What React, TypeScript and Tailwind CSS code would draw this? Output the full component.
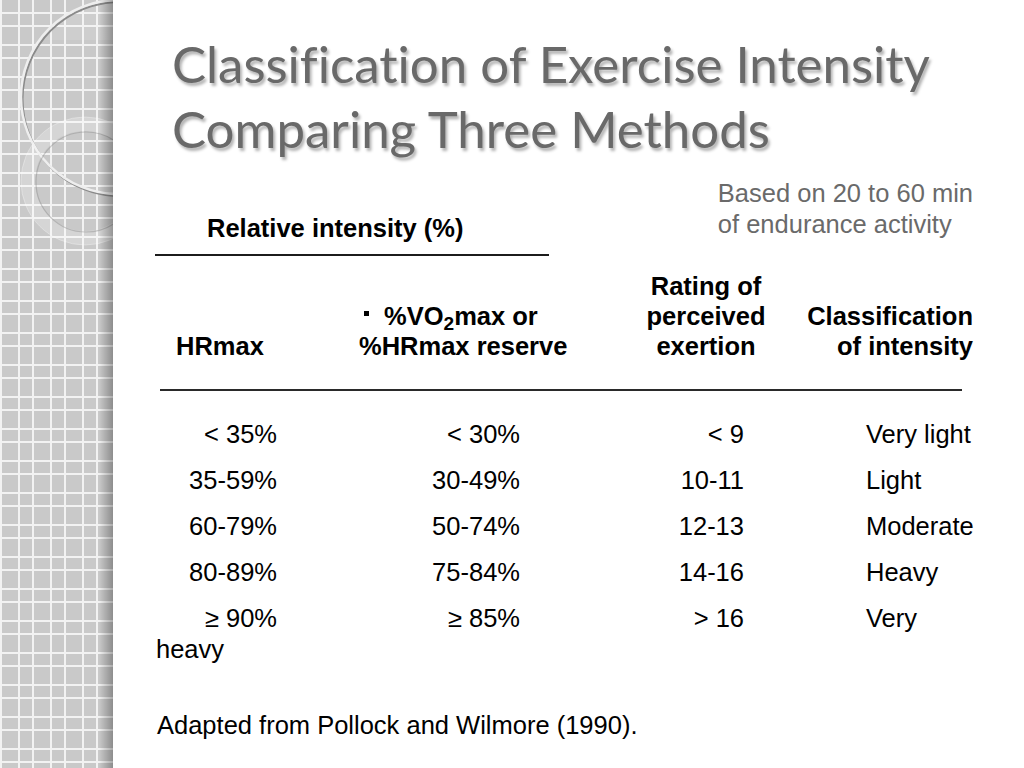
const rows = [
  ["< 35%", "< 30%", "< 9", "Very light"],
  ["35-59%", "30-49%", "10-11", "Light"],
  ["60-79%", "50-74%", "12-13", "Moderate"],
  ["80-89%", "75-84%", "14-16", "Heavy"],
  ["\u2265 90%", "\u2265 85%", "> 16", "Very"],
];

const SideStrip = () => {
  return (
    <div className="relative w-[113px] h-[768px] shrink-0 overflow-hidden bg-[#cacaca]">
      <svg width="113" height="768" className="block">
        <defs>
          <pattern id="grid" width="32" height="32" patternUnits="userSpaceOnUse" y="-20">
            <rect width="32" height="32" fill="#c9c9c9" />
            <rect x="0" y="0" width="2" height="32" fill="#f2f2f2" />
            <rect x="18" y="0" width="2" height="32" fill="#f2f2f2" />
            <rect x="0" y="0" width="32" height="2" fill="#f2f2f2" />
            <rect x="0" y="13" width="32" height="2" fill="#f2f2f2" />
          </pattern>
        </defs>
        <rect width="113" height="768" fill="url(#grid)" />
        {/* big arc */}
        <path d="M118 0 A97 97 0 0 0 40 40 L118 40 Z" fill="#ffffff" fillOpacity="0.1" />
        <circle cx="119.5" cy="99" r="97" fill="none" stroke="#8a8a8a" strokeWidth="2" />
        <circle cx="118" cy="97" r="97" fill="none" stroke="#eeeeee" strokeWidth="2.5" />
        {/* ring */}
        <circle cx="85" cy="181" r="57" fill="none" stroke="#ffffff" strokeOpacity="0.22" strokeWidth="14" />
        <circle cx="85" cy="181" r="64" fill="none" stroke="#ffffff" strokeOpacity="0.3" strokeWidth="1" />
        <circle cx="86" cy="182" r="50" fill="none" stroke="#8e8e8e" strokeOpacity="0.45" strokeWidth="1.2" />
      </svg>
      <div className="absolute inset-y-0 right-0 w-[14px] bg-gradient-to-r from-transparent to-black/30" />
    </div>
  );
};

export default function App() {
  return (
    <div className="flex w-[1024px] h-[768px] bg-white overflow-hidden">
      <SideStrip />
      <div className="flex-1 flex flex-col font-['Liberation_Sans',Arial,sans-serif] text-[25.5px] text-black">
        <h1 className="pl-[59px] pt-[31px] pb-[2px] font-['Lato',sans-serif] text-[51px] leading-[65px] text-[#696969] [font-variant-ligatures:none] [text-shadow:2px_3px_3px_rgba(0,0,0,0.3)]">
          Classification of Exercise Intensity
          <br />
          Comparing Three Methods
        </h1>

        <div className="ml-[42px] w-[818px] flex flex-col">
          <div className="mt-[15px] flex items-start">
            <div className="w-[395px] pt-[35px]">
              <div className="pl-[52px] font-bold leading-[30px]">Relative intensity (%)</div>
              <div className="mt-[11px] h-[2px] bg-[#1c1c1c]" />
            </div>
            <div className="ml-[169px] leading-[31px] text-[#6a6a6a] whitespace-nowrap">
              Based on 20 to 60 min
              <br />
              of endurance activity
            </div>
          </div>

          <div className="mt-[15px] grid grid-cols-[122px_243px_224px_229px] items-end font-bold leading-[30px]">
            <div className="pl-[21px]">HRmax</div>
            <div className="pl-[82px] whitespace-nowrap">
              <div className="pl-[5px]">
                <span className="inline-block w-[5px] h-[5px] bg-black align-[9px]" />
                <span className="ml-[15px]">
                  %VO<sub>2</sub>max or
                </span>
              </div>
              <div>%HRmax reserve</div>
            </div>
            <div>
              <div className="ml-[116px] w-[140px] text-center whitespace-nowrap">
                Rating of
                <br />
                perceived
                <br />
                exertion
              </div>
            </div>
            <div className="text-right whitespace-nowrap">
              Classification
              <br />
              of intensity
            </div>
          </div>

          <div className="mt-[28px] ml-[5px] w-[802px] h-[2px] bg-[#2a2a2a]" />

          <div className="mt-[28px] flex flex-col gap-[15px] leading-[31px]">
            {rows.map((r, i) => (
              <div key={i} className="grid grid-cols-[122px_243px_224px_229px] whitespace-nowrap">
                <div className="text-right">{r[0]}</div>
                <div className="text-right">{r[1]}</div>
                <div className="text-right">{r[2]}</div>
                <div className="pl-[122px]">{r[3]}</div>
              </div>
            ))}
          </div>
          <div className="ml-[1px] leading-[31px]">heavy</div>

          <div className="mt-[45px] ml-[2px] leading-[31px] whitespace-nowrap">Adapted from Pollock and Wilmore (1990).</div>
        </div>
      </div>
    </div>
  );
}
